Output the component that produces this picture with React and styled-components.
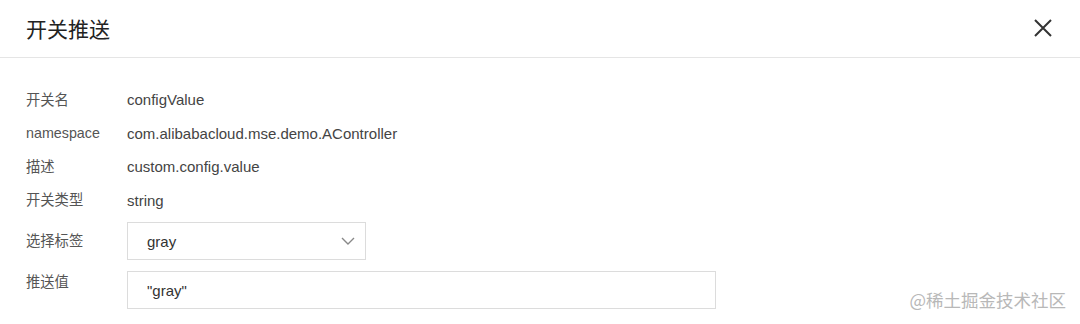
import styled, { createGlobalStyle } from "styled-components";

const GlobalStyle = createGlobalStyle`
  html, body {
    margin: 0;
    padding: 0;
    background: #fff;
  }
  body {
    font-family: "Liberation Sans", "Noto Sans CJK SC", sans-serif;
    color: #333;
  }
`;

const Dialog = styled.div`
  position: relative;
  width: 1080px;
  height: 324px;
  overflow: hidden;
  background: #fff;
`;

const Header = styled.div`
  height: 58px;
  display: flex;
  align-items: center;
  justify-content: space-between;
  padding: 0 22px 0 26px;
  border-bottom: 1px solid #e5e5e5;
  box-sizing: border-box;
`;

const Title = styled.h2`
  margin: 0;
  font-size: 21px;
  font-weight: 400;
  color: #222;
  font-family: "Noto Sans CJK SC", sans-serif;
  padding-bottom: 2px;
`;

const CloseButton = styled.button`
  border: 0;
  background: none;
  padding: 0;
  width: 30px;
  height: 30px;
  display: flex;
  align-items: center;
  justify-content: center;
  cursor: pointer;
  margin-top: -2px;
`;

const Body = styled.div`
  padding: 25px 26px 0;
`;

const Row = styled.div`
  display: grid;
  grid-template-columns: 101px 1fr;
  align-items: ${p => (p.$top ? "start" : "center")};
  min-height: 33.5px;
  margin-top: ${p => p.$gap || 0}px;
`;

const Label = styled.div`
  color: #555;
  font-size: 14.3px;
  line-height: 20px;
  padding-top: ${p => (p.$top ? "1px" : "0")};
`;

const Value = styled.div`
  color: #444;
  font-size: 15px;
`;

const Field = styled.div`
  width: ${p => p.$width}px;
  height: 38px;
  box-sizing: border-box;
  border: 1px solid #dcdcdc;
  display: flex;
  align-items: center;
  justify-content: space-between;
  padding: 0 10px 0 19px;
  font-size: 15px;
  color: #333;
`;

const Watermark = styled.div`
  position: absolute;
  right: 14px;
  bottom: 12px;
  font-size: 17.5px;
  color: #b8b8b8;
  font-family: "Noto Sans CJK SC", sans-serif;
`;

const info = [
  ["开关名", "configValue"],
  ["namespace", "com.alibabacloud.mse.demo.AController"],
  ["描述", "custom.config.value"],
  ["开关类型", "string"],
];

export default function App() {
  return (
    <>
      <GlobalStyle />
      <Dialog>
        <Header>
          <Title>开关推送</Title>
          <CloseButton aria-label="close">
            <svg width="18" height="18" viewBox="0 0 18 18">
              <path d="M1 1L17 17M17 1L1 17" stroke="#333" strokeWidth="2" fill="none" />
            </svg>
          </CloseButton>
        </Header>
        <Body>
          {info.map(([k, v]) => (
            <Row key={k}>
              <Label>{k}</Label>
              <Value>{v}</Value>
            </Row>
          ))}
          <Row $gap={5}>
            <Label>选择标签</Label>
            <Field $width={239}>
              <span>gray</span>
              <svg width="14" height="8" viewBox="0 0 14 8">
                <path d="M1 1L7 7L13 1" stroke="#888" strokeWidth="1.4" fill="none" />
              </svg>
            </Field>
          </Row>
          <Row $gap={11} $top>
            <Label $top>推送值</Label>
            <Field $width={589}>
              <span>"gray"</span>
            </Field>
          </Row>
        </Body>
        <Watermark>@稀土掘金技术社区</Watermark>
      </Dialog>
    </>
  );
}
